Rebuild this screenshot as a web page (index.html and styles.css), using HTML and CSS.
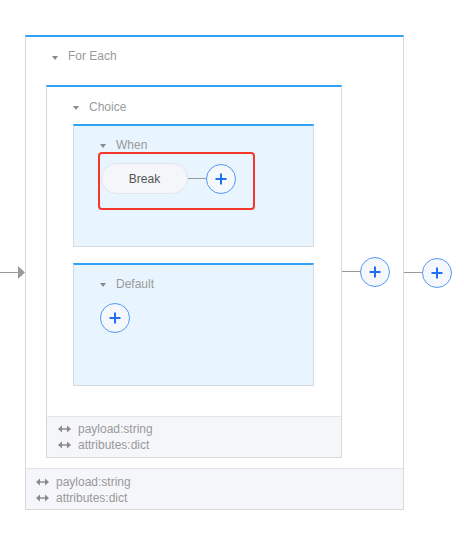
FILE: index.html
```html
<!DOCTYPE html>
<html>
<head>
<meta charset="utf-8">
<link rel="stylesheet" href="styles.css">
</head>
<body>
<div class="canvas">
  <div class="entry">
    <div class="line"></div>
    <svg class="arrowhead" width="7" height="13" viewBox="0 0 7 13"><path d="M0 0 L7 6.5 L0 13 Z" fill="#9a9a9a"/></svg>
  </div>

  <div class="scope foreach">
    <div class="scope-head"><span class="caret"></span><span>For Each</span></div>
    <div class="foreach-body">
      <div class="choice-row">
        <div class="scope choice">
          <div class="scope-head choice-head"><span class="caret"></span><span>Choice</span></div>
          <div class="choice-body">
            <div class="route">
              <div class="route-head"><span class="caret"></span><span>When</span></div>
              <div class="route-body when-body">
                <div class="highlight">
                  <div class="pill">Break</div>
                  <div class="line"></div>
                  <div class="plus"><svg width="12" height="12" viewBox="0 0 12 12"><path d="M6 0.5 V11.5 M0.5 6 H11.5" stroke="#1e6ff2" stroke-width="2"/></svg></div>
                </div>
              </div>
            </div>
            <div class="route">
              <div class="route-head"><span class="caret"></span><span>Default</span></div>
              <div class="route-body default-body">
                <div class="plus"><svg width="12" height="12" viewBox="0 0 12 12"><path d="M6 0.5 V11.5 M0.5 6 H11.5" stroke="#1e6ff2" stroke-width="2"/></svg></div>
              </div>
            </div>
          </div>
          <div class="footer choice-footer">
            <div class="meta"><svg class="dbl" width="13" height="8" viewBox="0 0 13 8"><path d="M0 4 L4 0.5 L4 7.5 Z M13 4 L9 0.5 L9 7.5 Z" fill="#8a8a8a"/><path d="M3 4 H10" stroke="#8a8a8a" stroke-width="1.4"/></svg><span>payload:string</span></div>
            <div class="meta"><svg class="dbl" width="13" height="8" viewBox="0 0 13 8"><path d="M0 4 L4 0.5 L4 7.5 Z M13 4 L9 0.5 L9 7.5 Z" fill="#8a8a8a"/><path d="M3 4 H10" stroke="#8a8a8a" stroke-width="1.4"/></svg><span>attributes:dict</span></div>
          </div>
        </div>
        <div class="line"></div>
        <div class="plus"><svg width="12" height="12" viewBox="0 0 12 12"><path d="M6 0.5 V11.5 M0.5 6 H11.5" stroke="#1e6ff2" stroke-width="2"/></svg></div>
      </div>
    </div>
    <div class="footer foreach-footer">
      <div class="meta"><svg class="dbl" width="13" height="8" viewBox="0 0 13 8"><path d="M0 4 L4 0.5 L4 7.5 Z M13 4 L9 0.5 L9 7.5 Z" fill="#8a8a8a"/><path d="M3 4 H10" stroke="#8a8a8a" stroke-width="1.4"/></svg><span>payload:string</span></div>
      <div class="meta"><svg class="dbl" width="13" height="8" viewBox="0 0 13 8"><path d="M0 4 L4 0.5 L4 7.5 Z M13 4 L9 0.5 L9 7.5 Z" fill="#8a8a8a"/><path d="M3 4 H10" stroke="#8a8a8a" stroke-width="1.4"/></svg><span>attributes:dict</span></div>
    </div>
  </div>

  <div class="line"></div>
  <div class="plus"><svg width="12" height="12" viewBox="0 0 12 12"><path d="M6 0.5 V11.5 M0.5 6 H11.5" stroke="#1e6ff2" stroke-width="2"/></svg></div>
</div>
</body>
</html>
```

FILE: styles.css
```css
* { box-sizing: border-box; }
html, body { margin: 0; padding: 0; background: #ffffff; }
body {
  font-family: "Liberation Sans", Arial, Helvetica, sans-serif;
  font-size: 12px;
  color: #999999;
}
.canvas {
  display: flex;
  align-items: center;
  padding-top: 35px;
}
.line {
  width: 18px;
  height: 1px;
  background: #9a9a9a;
  flex: none;
}
.entry {
  display: flex;
  align-items: center;
  width: 25px;
  flex: none;
}
.arrowhead { display: block; flex: none; }

.scope {
  border: 1px solid #d9d9d9;
  border-top: 2px solid #31a2f5;
  background: #ffffff;
  flex: none;
}
.foreach { width: 379px; }
.choice { width: 296px; }

.scope-head {
  height: 36px;
  display: flex;
  align-items: center;
  padding-top: 2px;
  padding-left: 26px;
  line-height: 16px;
  color: #9a9a9a;
}
.choice-head { height: 37px; }
.caret {
  width: 0;
  height: 0;
  border-left: 3.5px solid transparent;
  border-right: 3.5px solid transparent;
  border-top: 4px solid #8a8a8a;
  margin-right: 10px;
  margin-top: 3px;
}

.foreach-body {
  padding: 12px 0 10px 20px;
}
.choice-row {
  display: flex;
  align-items: center;
}

.choice-body {
  padding: 0 27px 30px 26px;
  display: flex;
  flex-direction: column;
  gap: 16px;
}
.route {
  height: 123px;
  border: 1px solid #d6d9de;
  border-top: 2px solid #31a2f5;
  background: #e8f4fe;
}
.route-head {
  display: flex;
  align-items: center;
  padding: 11px 0 0 26px;
  height: 26px;
  line-height: 16px;
  color: #9a9a9a;
}
.when-body { padding-left: 24px; }
.default-body { padding: 12px 0 0 26px; }

.highlight {
  display: inline-flex;
  align-items: center;
  border: 2px solid #f5372b;
  border-radius: 4px;
  padding: 9px 17px 14px 1px;
}
.pill {
  width: 87px;
  height: 31px;
  border-radius: 16px;
  background: #f4f6fa;
  border: 1px solid #e2e6ec;
  color: #555555;
  display: flex;
  align-items: center;
  justify-content: center;
  flex: none;
}
.plus {
  width: 30px;
  height: 30px;
  border-radius: 50%;
  border: 1px solid #5597f4;
  background: #f4f7fc;
  display: flex;
  align-items: center;
  justify-content: center;
  flex: none;
}
.plus svg { display: block; }

.footer {
  background: #f5f6f9;
  border-top: 1px solid #e2e4e8;
  padding: 5px 0 3px;
}
.choice-footer { padding: 4px 0 4px 11px; }
.foreach-footer { padding-left: 10px; }
.meta {
  display: flex;
  align-items: center;
  height: 16px;
  line-height: 16px;
  color: #999999;
}
.dbl { display: block; flex: none; margin-right: 7px; }
```
